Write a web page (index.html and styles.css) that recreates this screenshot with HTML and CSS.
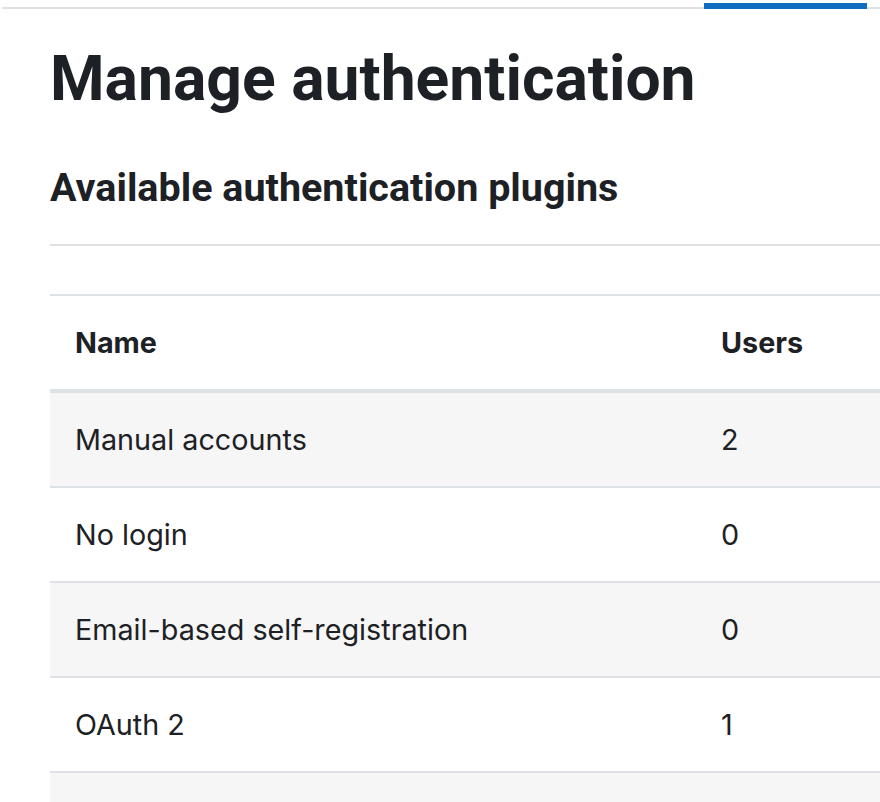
FILE: index.html
```html
<!DOCTYPE html>
<html lang="en">
<head>
<meta charset="utf-8">
<title>Manage authentication</title>
<link rel="stylesheet" href="styles.css">
</head>
<body>
<div class="topnav">
  <div class="tab-active"></div>
</div>
<main class="content">
  <h1 class="page-title">Manage authentication</h1>
  <h3 class="section-title">Available authentication plugins</h3>
  <hr class="divider">
  <div class="table-wrap">
    <table class="plugins">
      <thead>
        <tr><th class="col-name">Name</th><th class="col-users">Users</th><th class="col-rest"></th></tr>
      </thead>
      <tbody>
        <tr><td>Manual accounts</td><td>2</td><td></td></tr>
        <tr><td>No login</td><td>0</td><td></td></tr>
        <tr><td>Email-based self-registration</td><td>0</td><td></td></tr>
        <tr><td>OAuth 2</td><td>1</td><td></td></tr>
        <tr><td>&nbsp;</td><td></td><td></td></tr>
      </tbody>
    </table>
  </div>
</main>
</body>
</html>
```
FILE: styles.css
```css
html, body {
  margin: 0;
  padding: 0;
  background: #fff;
  overflow: hidden;
}
body {
  font-family: "Inter", "Roboto", "Liberation Sans", sans-serif;
  color: #1d2125;
  width: 880px;
  height: 802px;
}
.topnav {
  height: 7px;
  border-bottom: 2px solid #dee2e6;
  margin-left: 2px;
  display: flex;
  align-items: flex-end;
}
.tab-active {
  margin-left: 702px;
  width: 163px;
  height: 6px;
  margin-bottom: -2px;
  background: #0f6cbf;
}
.content {
  padding-left: 50px;
}
.page-title {
  font-family: "Roboto", "Liberation Sans", sans-serif;
  font-weight: 700;
  font-size: 62.4px;
  line-height: 72px;
  margin: 34px 0 0 0;
  letter-spacing: 0;
}
.section-title {
  font-family: "Roboto", "Liberation Sans", sans-serif;
  font-weight: 700;
  font-size: 39.5px;
  line-height: 46px;
  margin: 50px 0 0 0;
}
.divider {
  border: 0;
  border-top: 2px solid #dee2e6;
  margin: 33px 0 0 0;
  height: 0;
}
.table-wrap {
  margin-top: 48px;
}
.plugins {
  border-collapse: collapse;
  width: 1000px;
  font-size: 28.75px;
  line-height: 45px;
}
.plugins th, .plugins td {
  text-align: left;
  padding: 24px 25px;
  border-top: 2px solid #dee2e6;
  vertical-align: top;
}
.plugins th {
  font-family: "Inter", "Roboto", "Liberation Sans", sans-serif;
  font-weight: 700;
  border-bottom: 4px solid #dee2e6;
}
.col-name { width: 596px; }
.col-users { width: 150px; }
.plugins tbody tr:nth-child(odd) {
  background: #f6f6f6;
}
.plugins thead + tbody tr:first-child td {
  border-top: 0;
}
```
